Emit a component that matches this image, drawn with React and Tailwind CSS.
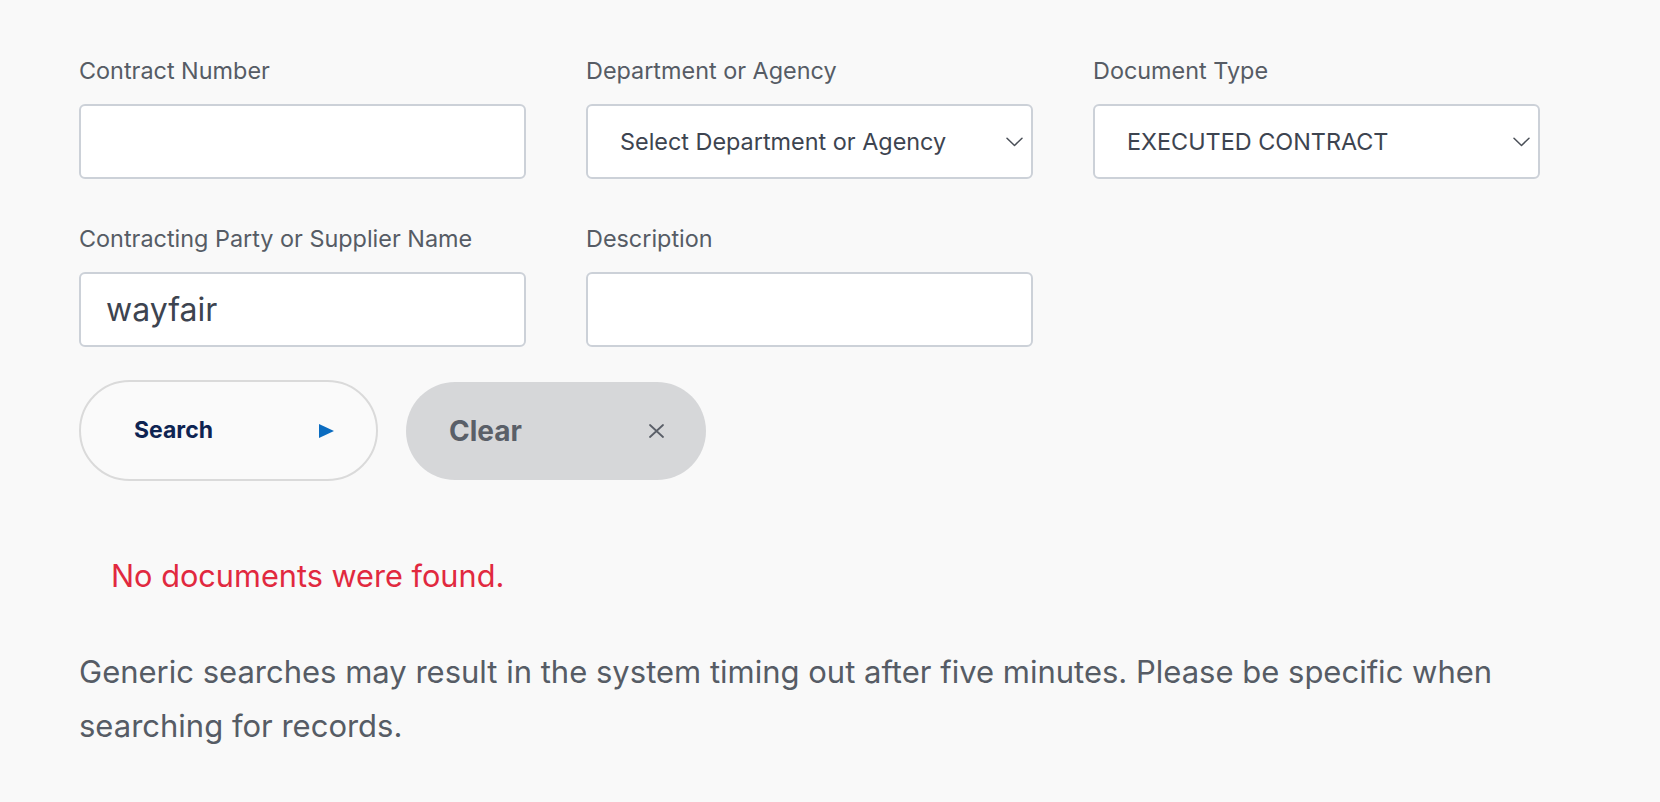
import React, { useState } from "react";

const font = { fontFamily: "Inter, 'Noto Sans', sans-serif" };

const Chevron = () => (
  <svg width="17" height="10" viewBox="0 0 17 10" fill="none" className="shrink-0">
    <path d="M1 1.2L8.5 8.5L16 1.2" stroke="#4a4f57" strokeWidth="1.5" strokeLinecap="round" strokeLinejoin="round" />
  </svg>
);

const Field = ({ label, children }) => (
  <div className="flex flex-col">
    <label className="block text-[23.4px] leading-[28px] text-[#565c65] whitespace-nowrap">{label}</label>
    <div className="mt-[19px]">{children}</div>
  </div>
);

const TextBox = ({ value, onChange }) => (
  <input
    type="text"
    value={value}
    onChange={(e) => onChange(e.target.value)}
    className="w-full h-[75px] px-[25px] bg-white border-2 border-[#ccd1d8] rounded-[6px] text-[32px] text-[#3d4450] outline-none"
    style={font}
  />
);

const SelectBox = ({ text }) => (
  <div className="w-full h-[75px] pl-[32px] pr-[8px] bg-white border-2 border-[#ccd1d8] rounded-[6px] flex items-center justify-between">
    <span className="text-[23.4px] text-[#3d4450] whitespace-nowrap">{text}</span>
    <Chevron />
  </div>
);

export default function App() {
  const [contract, setContract] = useState("");
  const [supplier, setSupplier] = useState("wayfair");
  const [description, setDescription] = useState("");

  return (
    <div className="min-h-screen w-full bg-[#f9f9f9] pl-[79px] pt-[57px]" style={font}>
      {/* Filtres */}
      <div className="grid grid-cols-[repeat(3,447px)] gap-x-[60px] gap-y-[46px]">
        <Field label="Contract Number">
          <TextBox value={contract} onChange={setContract} />
        </Field>
        <Field label="Department or Agency">
          <SelectBox text="Select Department or Agency" />
        </Field>
        <Field label="Document Type">
          <SelectBox text="EXECUTED CONTRACT" />
        </Field>
        <Field label="Contracting Party or Supplier Name">
          <TextBox value={supplier} onChange={setSupplier} />
        </Field>
        <Field label="Description">
          <TextBox value={description} onChange={setDescription} />
        </Field>
      </div>

      {/* Actions */}
      <div className="mt-[33px] flex items-center gap-[28px]">
        <button
          type="button"
          className="w-[299px] h-[101px] rounded-full border-2 border-[#dadada] bg-[#fafafa] flex items-center pl-[53px] pr-[42px] justify-between"
        >
          <span className="text-[23px] font-bold text-[#0e2452]">Search</span>
          <svg width="15" height="14" viewBox="0 0 15 14">
            <path d="M0 0L15 7L0 14Z" fill="#0b6cc0" />
          </svg>
        </button>
        <button
          type="button"
          className="w-[300px] h-[98px] rounded-full bg-[#d6d7d9] flex items-center pl-[43px] pr-[42px] justify-between"
        >
          <span className="text-[28px] font-bold text-[#5a5f68]">Clear</span>
          <svg width="15" height="14" viewBox="0 0 15 14" fill="none">
            <path d="M1 1L14 13M14 1L1 13" stroke="#5a5f68" strokeWidth="1.8" strokeLinecap="round" />
          </svg>
        </button>
      </div>

      {/* Résultat */}
      <p className="mt-[76px] pl-[32px] text-[30.7px] leading-[37px] text-[#e1293f]">No documents were found.</p>

      <p className="mt-[51px] w-[1462px] text-[31px] leading-[54px] text-[#565c65]">
        Generic searches may result in the system timing out after five minutes. Please be specific when
        searching for records.
      </p>
    </div>
  );
}
